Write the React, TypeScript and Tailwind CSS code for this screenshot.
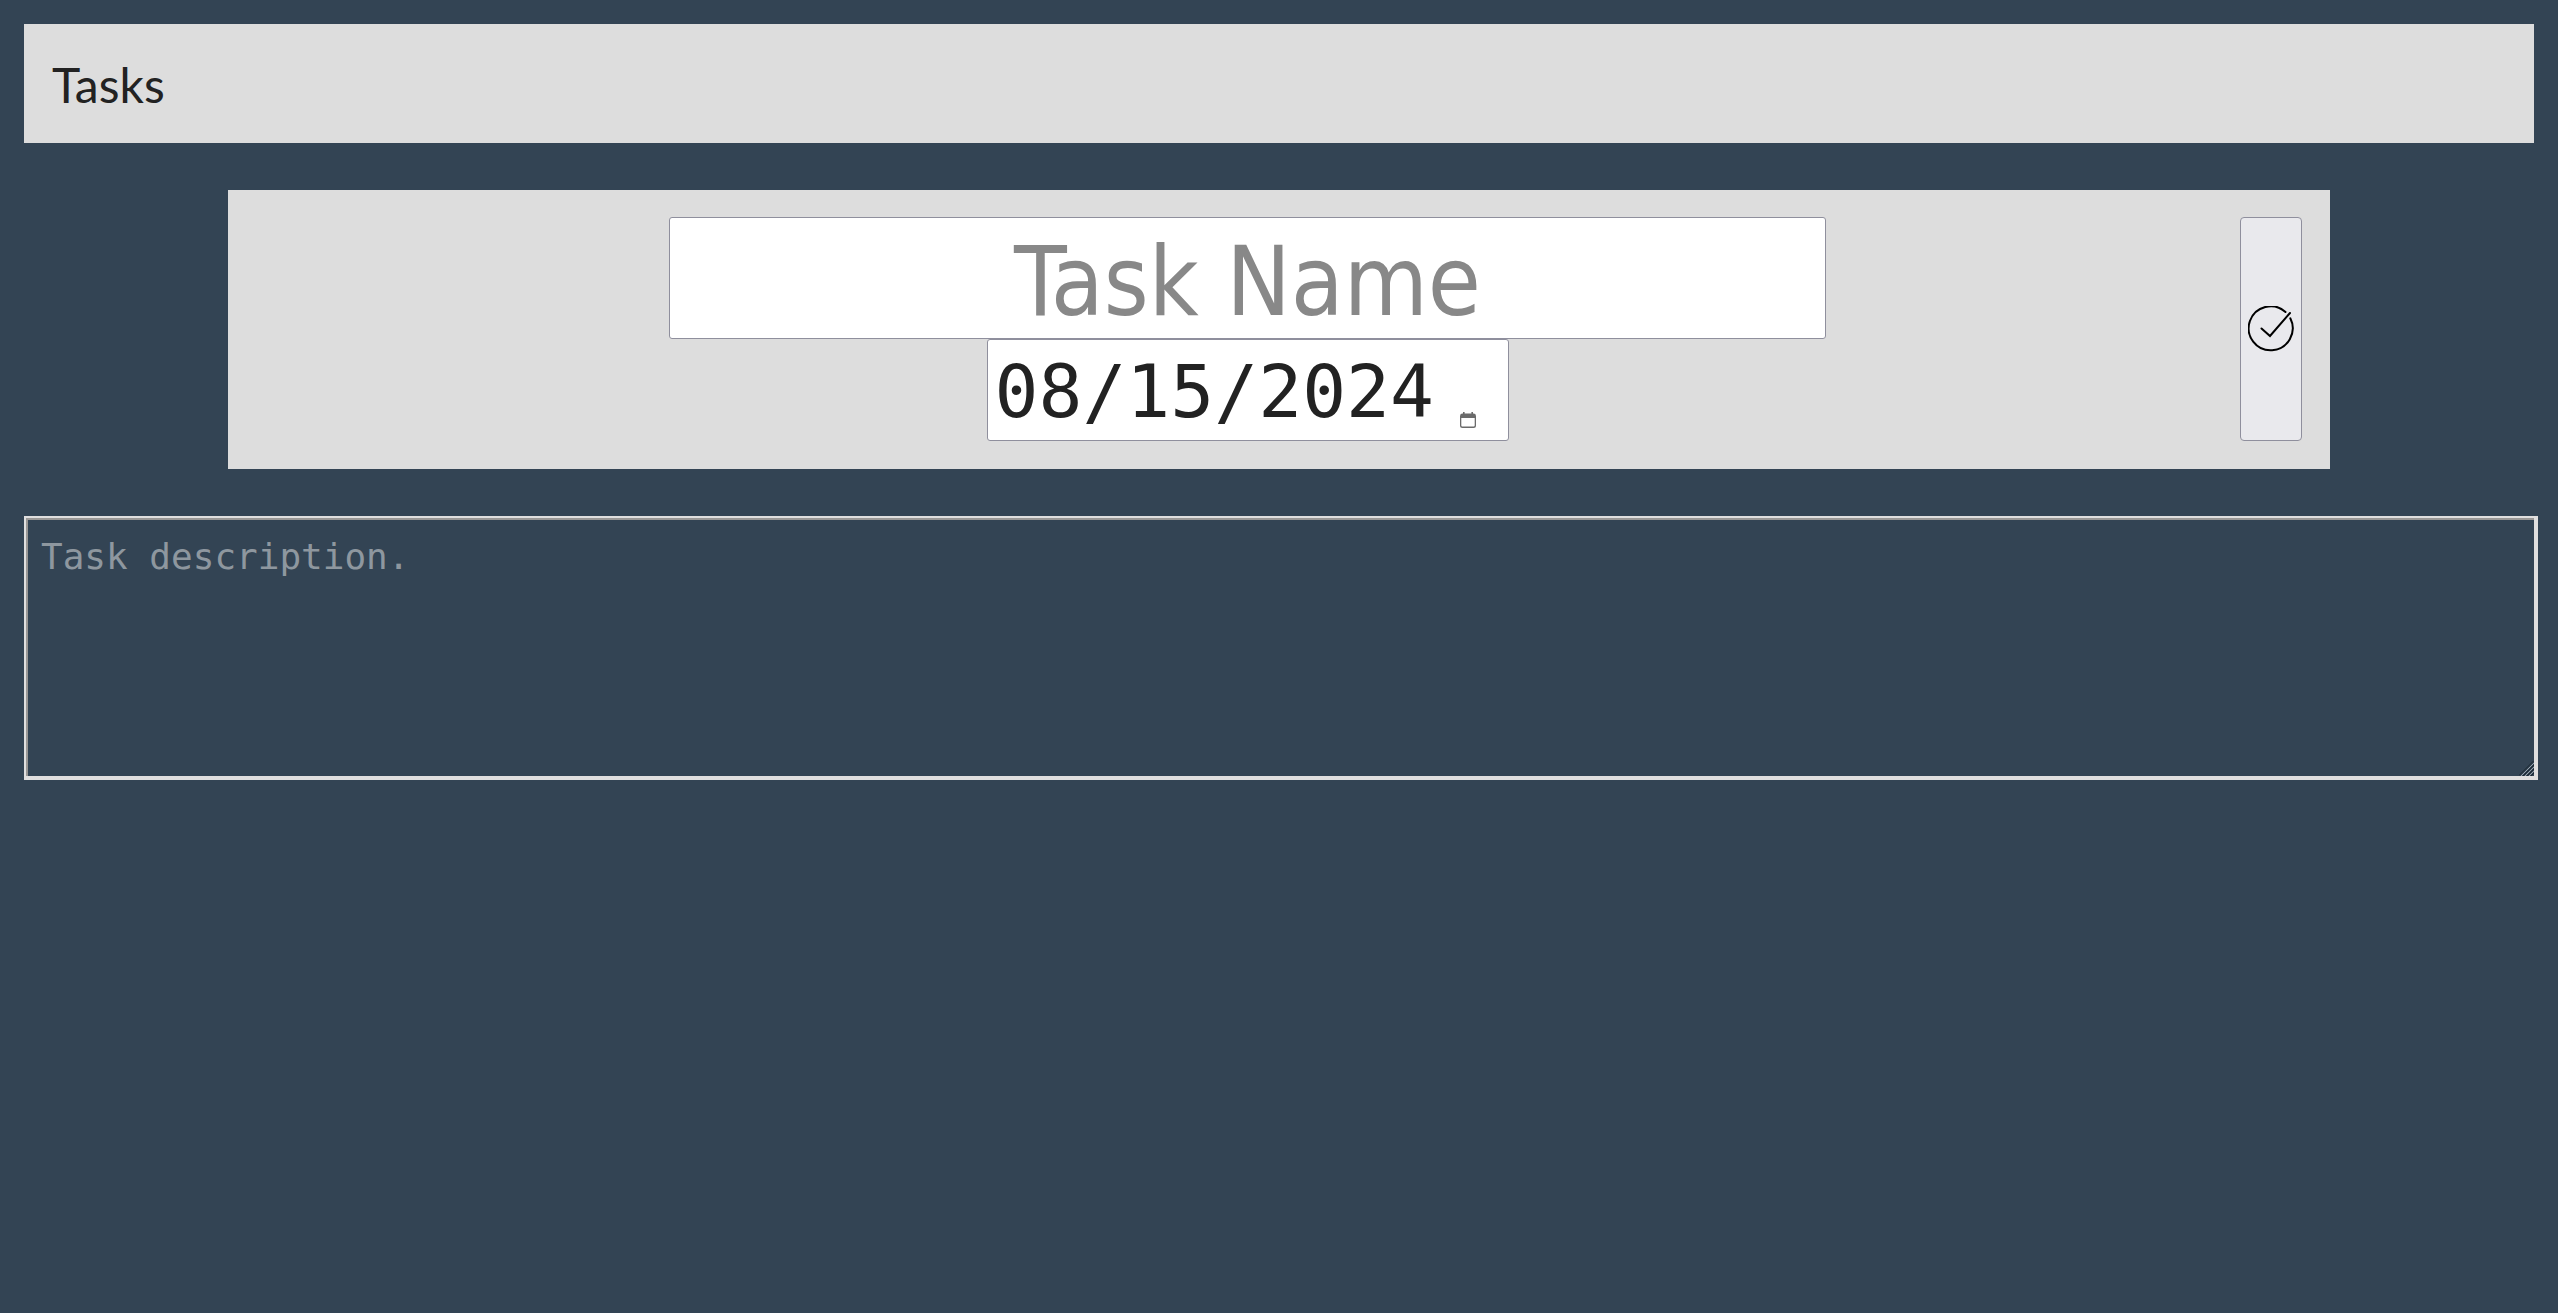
import { useState } from "react";

function CheckCircle() {
  return (
    <svg viewBox="0 0 46 46" className="size-[46px]" fill="none" stroke="#000" strokeWidth="2" strokeLinecap="round" aria-hidden="true">
      <path d="M37.5 6 A22 22 0 1 0 42.3 12.3" />
      <path d="M13.5 22.5 L22 30 L42 7" />
    </svg>
  );
}

function CalendarGlyph() {
  return (
    <svg viewBox="0 0 16 16" className="size-4" fill="#6b6b6b" aria-hidden="true">
      <path
        fillRule="evenodd"
        d="M3 0h1.6v1.6h6.8V0H13v1.6h.5A2.5 2.5 0 0 1 16 4v9.5a2.5 2.5 0 0 1-2.5 2.5h-11A2.5 2.5 0 0 1 0 13.500V4a2.500 2.500 0 0 1 2.500-2.400H3zM1.300 6v7.200c0 .8.5 1.300 1.300 1.300h10.800c.8 0 1.300-.5 1.300-1.300V6z"
      />
    </svg>
  );
}

function ResizeGrip() {
  return (
    <svg viewBox="0 0 15 15" className="pointer-events-none absolute right-1 bottom-1 size-[15px]" fill="none" aria-hidden="true">
      <path d="M0 14.500L14.500 0M4 15L15 4M8 15L15 8M12 15L15 12" stroke="#1b2731" />
      <path d="M2 15L15 2M6 15L15 6M10 15L15 10" stroke="#98a2ab" />
    </svg>
  );
}

export default function App() {
  const [name, setName] = useState("");
  const [date, setDate] = useState("2024-08-15");
  const [description, setDescription] = useState("");

  return (
    <div className="min-h-screen bg-[#334454] p-6 font-['Lato',sans-serif] text-[#222]">
      <header className="bg-[#ddd] px-7 pt-[29px] pb-[27px]">
        <h1 className="text-[48px] leading-[63px]">Tasks</h1>
      </header>

      <form className="mx-[204px] mt-[47px] flex bg-[#ddd] p-7 pt-[27px] pl-[27px]" onSubmit={(e) => e.preventDefault()}>
        <div className="flex flex-1 flex-col items-center">
          <input
            type="text"
            aria-label="Task Name"
            placeholder="Task Name"
            value={name}
            onChange={(e) => setName(e.target.value)}
            className="h-[122px] w-7/12 rounded-[3px] border border-[#8f8f9d] bg-white pt-2 text-center font-['DejaVu_Sans_Condensed','DejaVu_Sans',sans-serif] text-[96px] outline-none placeholder:text-[#888]"
          />
          <div className="flex h-[102px] items-center rounded-[3px] border border-[#8f8f9d] bg-white pr-8 pl-[7px]">
            <input
              type="date"
              aria-label="Due date"
              value={date}
              onChange={(e) => setDate(e.target.value)}
              className="w-[465px] pt-1 font-['DejaVu_Sans_Mono',monospace] text-[73px] leading-[98px] outline-none [&::-webkit-calendar-picker-indicator]:hidden [&::-webkit-datetime-edit]:p-0 [&::-webkit-datetime-edit-fields-wrapper]:p-0 [&::-webkit-datetime-edit-month-field]:p-0 [&::-webkit-datetime-edit-day-field]:p-0 [&::-webkit-datetime-edit-year-field]:p-0"
            />
            <span className="mb-3 self-end">
              <CalendarGlyph />
            </span>
          </div>
        </div>
        <button
          type="submit"
          aria-label="Save task"
          className="flex w-[62px] items-center justify-center rounded-[4px] border border-[#8f8f9d] bg-[#e9e9ed]"
        >
          <CheckCircle />
        </button>
      </form>

      <div className="relative mt-[47px] -mr-1">
        <textarea
          aria-label="Task description"
          placeholder="Task description."
          value={description}
          onChange={(e) => setDescription(e.target.value)}
          className="block h-[264px] w-full resize-none border-2 border-r-4 border-b-4 border-[#e0dfdf] bg-transparent px-[15px] py-[17px] font-['DejaVu_Sans_Mono',monospace] text-[36px] leading-[44px] text-[#ddd] shadow-[inset_2px_2px_0_#9a9896] outline-none placeholder:text-[#8e979f]"
        />
        <ResizeGrip />
      </div>
    </div>
  );
}
